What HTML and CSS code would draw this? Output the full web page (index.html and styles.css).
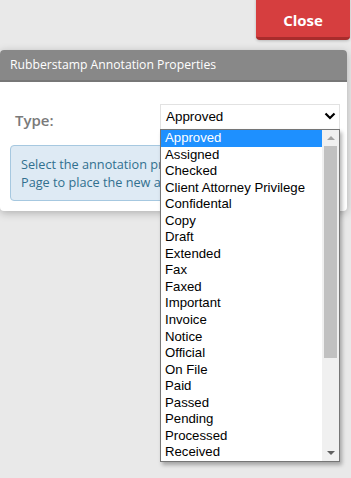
FILE: index.html
```html
<!DOCTYPE html>
<html>
<head>
    <meta charset="UTF-8">
    <title>Rubberstamp Annotation Properties</title>
    <link rel="stylesheet" href="styles.css">
</head>
<body>
    <div class="topbar">
        <button class="close-btn">Close</button>
    </div>
    <div class="dialog">
        <div class="dialog-header">Rubberstamp Annotation Properties</div>
        <div class="dialog-body">
            <div class="field-row">
                <label class="field-label">Type:</label>
                <div class="select-wrap">
                    <div class="select">
                        <span>Approved</span>
                        <svg class="chevron" width="12" height="8" viewBox="0 0 12 8">
                            <path d="M1.5 1.5 L6 6 L10.5 1.5" fill="none" stroke="#000" stroke-width="2.2"/>
                        </svg>
                    </div>
                    <div class="dropdown">
                        <ul class="options">
                            <li class="on">Approved</li>
                            <li>Assigned</li>
                            <li>Checked</li>
                            <li>Client Attorney Privilege</li>
                            <li>Confidental</li>
                            <li>Copy</li>
                            <li>Draft</li>
                            <li>Extended</li>
                            <li>Fax</li>
                            <li>Faxed</li>
                            <li>Important</li>
                            <li>Invoice</li>
                            <li>Notice</li>
                            <li>Official</li>
                            <li>On File</li>
                            <li>Paid</li>
                            <li>Passed</li>
                            <li>Pending</li>
                            <li>Processed</li>
                            <li>Received</li>
                            <li>Revised</li>
                        </ul>
                        <div class="scrollbar">
                            <span class="arrow-up"></span>
                            <div class="track"><div class="thumb"></div></div>
                            <span class="arrow-down"></span>
                        </div>
                    </div>
                </div>
            </div>
            <div class="alert">
                Select the annotation properties and then click on the<br>
                Page to place the new annotation.
            </div>
        </div>
    </div>
</body>
</html>
```

FILE: styles.css
```css
* {
    margin: 0;
    padding: 0;
    box-sizing: border-box;
}
html, body {
    height: 100%;
}
body {
    background-color: #e9e9e9;
    font-family: "Open Sans", "Liberation Sans", sans-serif;
}
.topbar {
    display: flex;
    justify-content: flex-end;
    height: 40px;
    padding-right: 1px;
}
.close-btn {
    width: 94px;
    height: 44px;
    margin-top: -4px;
    border: none;
    border-bottom: 3px solid #a82c2c;
    border-radius: 4px;
    background-color: #d63e3f;
    color: #fff;
    font-family: "Open Sans", sans-serif;
    font-size: 15px;
    font-weight: 700;
    padding-top: 7px;
    box-shadow: 0 1px 3px rgba(0, 0, 0, .2);
}
.dialog {
    width: 347px;
    margin-top: 10px;
    background-color: #fff;
    border-radius: 4px;
    box-shadow: 0 2px 8px rgba(0, 0, 0, .25);
}
.dialog-header {
    height: 32px;
    padding-left: 10px;
    line-height: 30px;
    background-color: #888;
    border-bottom: 2px solid #777;
    border-radius: 4px 4px 0 0;
    color: #fff;
    font-size: 12.2px;
}
.dialog-body {
    padding: 21px 7px 10px 10px;
}
.field-row {
    display: flex;
    align-items: center;
}
.field-label {
    width: 150px;
    padding-left: 5px;
    padding-top: 7px;
    color: #7a7a7a;
    font-size: 15px;
    font-weight: 600;
}
.select-wrap {
    position: relative;
    width: 180px;
}
.select {
    display: flex;
    align-items: center;
    justify-content: space-between;
    height: 25px;
    padding: 0 3px 2px 5px;
    border: 1px solid #e2e2e2;
    border-bottom: none;
    font-family: "Liberation Sans", Arial, sans-serif;
    font-size: 13.4px;
    color: #000;
}
.dropdown {
    position: absolute;
    top: 25px;
    left: 0;
    z-index: 2;
    display: flex;
    width: 180px;
    height: 333px;
    border: 1px solid #767676;
    background-color: #fff;
    box-shadow: 2px 3px 4px rgba(0, 0, 0, .3);
    font-family: "Liberation Sans", Arial, sans-serif;
    font-size: 13.2px;
}
.options {
    flex: 1;
    list-style: none;
    overflow: hidden;
}
.options li {
    height: 16.55px;
    line-height: 15px;
    padding-left: 4px;
    color: #000;
    white-space: nowrap;
}
.options .on {
    background-color: #1e90ff;
    color: #fff;
}
.scrollbar {
    display: flex;
    flex-direction: column;
    align-items: center;
    width: 17px;
    background-color: #f0f0f0;
}
.arrow-up,
.arrow-down {
    width: 0;
    height: 0;
    margin: 6px 0;
    border-left: 4px solid transparent;
    border-right: 4px solid transparent;
}
.arrow-up {
    border-bottom: 4px solid #a3a3a3;
}
.arrow-down {
    border-top: 4px solid #606060;
}
.track {
    flex: 1;
    width: 100%;
    padding: 0 2px;
}
.thumb {
    height: 212px;
    background-color: #c1c1c1;
}
.alert {
    margin-top: 15px;
    padding: 9px 10px 9px 10px;
    border: 1px solid #a6c8e0;
    border-radius: 4px;
    background-color: #deeaf4;
    color: #31708f;
    font-size: 12.7px;
    line-height: 18px;
    white-space: nowrap;
    overflow: hidden;
}
```
